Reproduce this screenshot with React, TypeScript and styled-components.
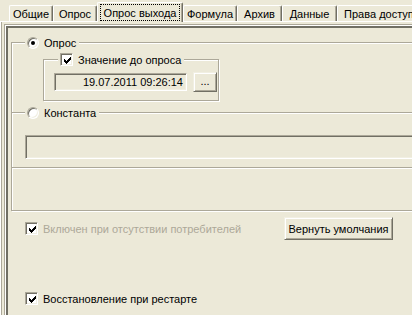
import styled, { createGlobalStyle } from "styled-components";

const COLORS = {
  face: "#ece9d8",
  light: "#f1efe2",
  white: "#ffffff",
  shadow: "#aca899",
  dark: "#716f64",
  text: "#000000",
  grayText: "#aca899",
};

const TABS = [
  { title: "Общие", width: 44 },
  { title: "Опрос", width: 44 },
  { title: "Опрос выхода", width: 86, active: true },
  { title: "Формула", width: 54 },
  { title: "Архив", width: 45 },
  { title: "Данные", width: 55 },
  { title: "Права доступа", width: 90 },
];

const GlobalStyle = createGlobalStyle`
  html, body {
    margin: 0;
    padding: 0;
    background: ${COLORS.face};
    overflow: hidden;
  }
  body {
    font-family: "Liberation Sans", Arial, sans-serif;
    font-size: 11px;
    color: ${COLORS.text};
  }
`;

const CheckMark = () => (
  <svg width="7" height="7" viewBox="0 0 7 7" shapeRendering="crispEdges">
    <path
      d="M0 2h1v3H0z M1 3h1v3H1z M2 4h1v3H2z M3 3h1v3H3z M4 2h1v3H4z M5 1h1v3H5z M6 0h1v3H6z"
      fill="#000"
    />
  </svg>
);

const CheckBox = ({ checked }: { checked?: boolean }) => (
  <CheckBoxFrame>{checked && <CheckMark />}</CheckBoxFrame>
);

export default function App() {
  return (
    <Root>
      <GlobalStyle />
      <TabStrip>
        {TABS.map((tab) => (
          <Tab key={tab.title} $width={tab.width} $active={tab.active}>
            {tab.active ? <FocusRect>{tab.title}</FocusRect> : tab.title}
          </Tab>
        ))}
      </TabStrip>
      <TabPage>
        <Panel>
          <OuterGroup>
            <Legend>
              <Radio $checked />
              <span>Опрос</span>
            </Legend>
            <ValueGroup>
              <Legend $left={14}>
                <CheckBox checked />
                <span>Значение до опроса</span>
              </Legend>
              <FieldRow>
                <DateField>19.07.2011 09:26:14</DateField>
                <SmallButton>...</SmallButton>
              </FieldRow>
            </ValueGroup>
            <ConstGroup>
              <Legend>
                <Radio />
                <span>Константа</span>
              </Legend>
              <ConstField />
            </ConstGroup>
          </OuterGroup>
          <OptionRow>
            <CheckLabel $disabled>
              <CheckBox checked />
              <span>Включен при отсутствии потребителей</span>
            </CheckLabel>
            <Button>Вернуть умолчания</Button>
          </OptionRow>
          <RestartRow>
            <CheckLabel>
              <CheckBox checked />
              <span>Восстановление при рестарте</span>
            </CheckLabel>
          </RestartRow>
        </Panel>
      </TabPage>
    </Root>
  );
}

const Root = styled.div`
  width: 412px;
  height: 315px;
  overflow: hidden;
  background: ${COLORS.face};
`;

const TabStrip = styled.div`
  display: flex;
  align-items: flex-end;
  height: 21px;
  padding-left: 9px;
  position: relative;
  z-index: 1;
`;

const Tab = styled.div<{ $width: number; $active?: boolean }>`
  flex: none;
  box-sizing: border-box;
  width: ${(p) => p.$width}px;
  height: ${(p) => (p.$active ? 20 : 16)}px;
  margin-bottom: ${(p) => (p.$active ? -1 : 0)}px;
  padding-top: ${(p) => (p.$active ? 0 : 1)}px;
  display: flex;
  align-items: center;
  justify-content: center;
  white-space: nowrap;
  background: ${COLORS.face};
  border-left: 1px solid ${COLORS.white};
  border-top: 1px solid ${COLORS.white};
  border-right: 1px solid ${COLORS.dark};
  border-top-left-radius: 2px;
  border-top-right-radius: 2px;
  box-shadow: inset -1px 0 0 ${COLORS.shadow};
`;

const FocusRect = styled.span`
  display: flex;
  align-items: center;
  height: 15px;
  padding: 0 3px;
  outline: 1px dotted #000;
`;

const TabPage = styled.div`
  border-top: 1px solid ${COLORS.white};
  border-left: 1px solid ${COLORS.white};
  box-shadow: inset 1px 0 0 ${COLORS.shadow};
  padding: 2px 0 0 3px;
`;

const Panel = styled.div`
  width: 480px;
  height: 320px;
  box-sizing: border-box;
  border-top: 1px solid ${COLORS.shadow};
  border-left: 1px solid ${COLORS.shadow};
  box-shadow: inset 1px 1px 0 ${COLORS.white}, inset 3px 3px 0 ${COLORS.dark};
  padding: 3px 0 0 3px;
`;

const Group = styled.div`
  position: relative;
  box-sizing: border-box;
  border: 1px solid ${COLORS.shadow};
  box-shadow: inset 1px 1px 0 ${COLORS.white}, 1px 1px 0 ${COLORS.white};
`;

const OuterGroup = styled(Group)`
  margin: 14px 0 0 3px;
  width: 500px;
  height: 169px;
`;

const ValueGroup = styled(Group)`
  margin: 16px 0 0 31px;
  width: 176px;
  height: 42px;
`;

const ConstGroup = styled(Group)`
  margin: 11px 0 0 -1px;
  width: 500px;
  height: 56px;
`;

const Legend = styled.div<{ $left?: number }>`
  position: absolute;
  top: -7px;
  left: ${(p) => p.$left ?? 13}px;
  height: 13px;
  padding: 0 3px 0 2px;
  display: flex;
  align-items: center;
  gap: 5px;
  background: ${COLORS.face};
  white-space: nowrap;
`;

const Radio = styled.span<{ $checked?: boolean }>`
  flex: none;
  position: relative;
  box-sizing: border-box;
  width: 12px;
  height: 12px;
  border-radius: 50%;
  background: ${COLORS.white};
  border: 1px solid;
  border-color: ${COLORS.shadow} ${COLORS.white} ${COLORS.white} ${COLORS.shadow};
  box-shadow: inset 1px 1px 0 ${COLORS.dark}, inset -1px -1px 0 ${COLORS.light};

  &::after {
    content: "";
    display: ${(p) => (p.$checked ? "block" : "none")};
    position: absolute;
    left: 3px;
    top: 3px;
    width: 4px;
    height: 4px;
    border-radius: 50%;
    background: #000;
  }
`;

const CheckBoxFrame = styled.span`
  flex: none;
  box-sizing: border-box;
  width: 13px;
  height: 13px;
  padding: 2px 0 0 2px;
  background: ${COLORS.white};
  border: 1px solid;
  border-color: ${COLORS.shadow} ${COLORS.white} ${COLORS.white} ${COLORS.shadow};
  box-shadow: inset 1px 1px 0 ${COLORS.dark}, inset -1px -1px 0 ${COLORS.light};
  display: flex;
  align-items: flex-start;
  justify-content: flex-start;

  svg {
    display: block;
    margin: 1px 0 0 1px;
  }
`;

const FieldRow = styled.div`
  display: flex;
  align-items: center;
  gap: 6px;
  margin: 12px 0 0 10px;
`;

const SunkenBox = styled.div`
  box-sizing: border-box;
  border: 1px solid;
  border-color: ${COLORS.shadow} ${COLORS.white} ${COLORS.white} ${COLORS.shadow};
  box-shadow: inset 1px 1px 0 ${COLORS.dark}, inset -1px -1px 0 ${COLORS.light};
  background: ${COLORS.face};
`;

const DateField = styled(SunkenBox)`
  width: 133px;
  height: 18px;
  padding-right: 3px;
  display: flex;
  align-items: center;
  justify-content: flex-end;
`;

const ConstField = styled(SunkenBox)`
  width: 480px;
  height: 24px;
  margin: 22px 0 0 13px;
`;

const Button = styled.div`
  box-sizing: border-box;
  height: 23px;
  display: flex;
  align-items: center;
  justify-content: center;
  background: ${COLORS.face};
  border: 1px solid;
  border-color: ${COLORS.light} ${COLORS.dark} ${COLORS.dark} ${COLORS.light};
  box-shadow: inset 1px 1px 0 ${COLORS.white}, inset -1px -1px 0 ${COLORS.shadow};
  white-space: nowrap;
`;

const SmallButton = styled(Button)`
  width: 24px;
  height: 20px;
  padding-bottom: 2px;
`;

const OptionRow = styled.div`
  display: grid;
  grid-template-columns: 259px 109px;
  align-items: center;
  margin-top: 6px;
  padding-left: 17px;
`;

const RestartRow = styled.div`
  margin-top: 52px;
  padding-left: 17px;
`;

const CheckLabel = styled.div<{ $disabled?: boolean }>`
  display: flex;
  align-items: center;
  gap: 5px;
  height: 13px;
  white-space: nowrap;
  color: ${(p) => (p.$disabled ? COLORS.grayText : COLORS.text)};
`;
